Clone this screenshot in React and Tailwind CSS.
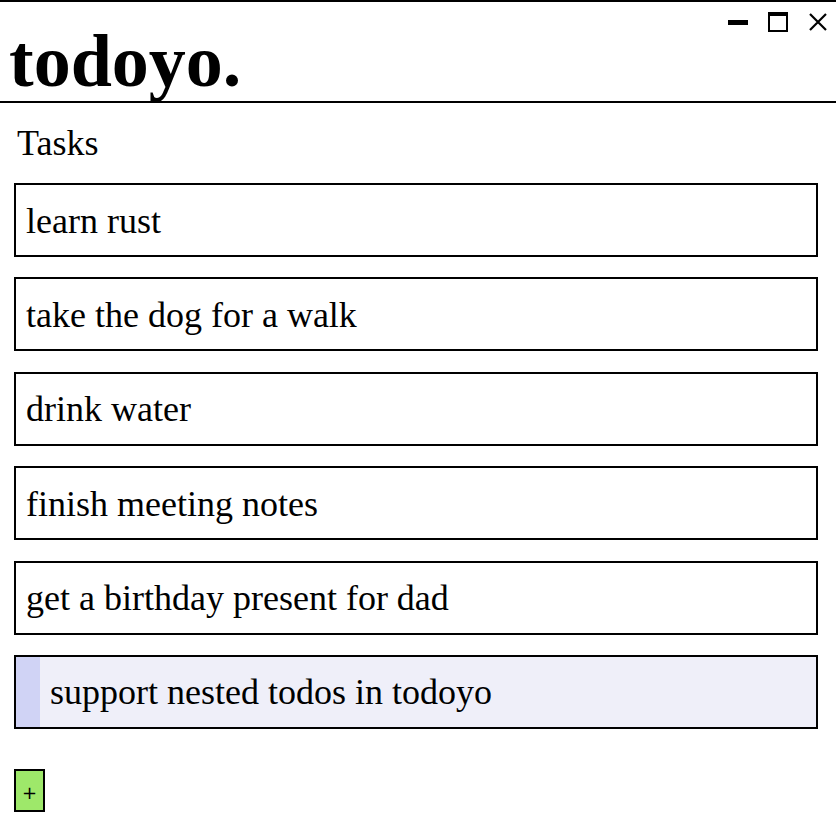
import React from "react";

const tasks = [
  "learn rust",
  "take the dog for a walk",
  "drink water",
  "finish meeting notes",
  "get a birthday present for dad",
];

export default function App() {
  return (
    <div
      className="w-[836px] h-[826px] bg-white border-t-2 border-black text-black overflow-hidden"
      style={{ fontFamily: '"Liberation Serif", serif' }}
    >
      <header className="relative h-[101px] border-b-2 border-black">
        <h1 className="absolute left-[9px] top-[22px] text-[74px] leading-none font-bold">
          todoyo.
        </h1>
        <div className="absolute right-[8px] top-[10px] flex items-center gap-[20px]">
          <div className="w-[20px] h-[20px] flex items-center">
            <div className="w-[20px] h-[5px] bg-black" />
          </div>
          <div className="w-[20px] h-[20px] border-2 border-t-4 border-black" />
          <svg width="20" height="20" viewBox="0 0 20 20">
            <path d="M2 2 L18 18 M18 2 L2 18" stroke="black" strokeWidth="2.2" />
          </svg>
        </div>
      </header>
      <main className="px-[14px]">
        <div className="pl-[3px] pt-[19px] text-[36px] leading-[42px]">Tasks</div>
        <div className="mt-[19px] flex flex-col gap-[20.4px] w-[804px]">
          {tasks.map((t) => (
            <div
              key={t}
              className="h-[74px] border-2 border-black flex items-center pl-[10px] pt-[1px] text-[36px]"
            >
              {t}
            </div>
          ))}
          <div className="h-[74px] border-2 border-black flex bg-[#efeff9] text-[36px]">
            <div className="w-[24px] bg-[#d0d3f5]" />
            <div className="flex items-center pl-[10px] pt-[1px]">support nested todos in todoyo</div>
          </div>
        </div>
        <button
          className="mt-[40px] w-[31px] h-[43px] border-2 border-black bg-[#9ee86a] flex items-center justify-center text-[18px] pt-[4px]"
          style={{ fontFamily: '"DejaVu Sans", sans-serif' }}
        >
          +
        </button>
      </main>
    </div>
  );
}
